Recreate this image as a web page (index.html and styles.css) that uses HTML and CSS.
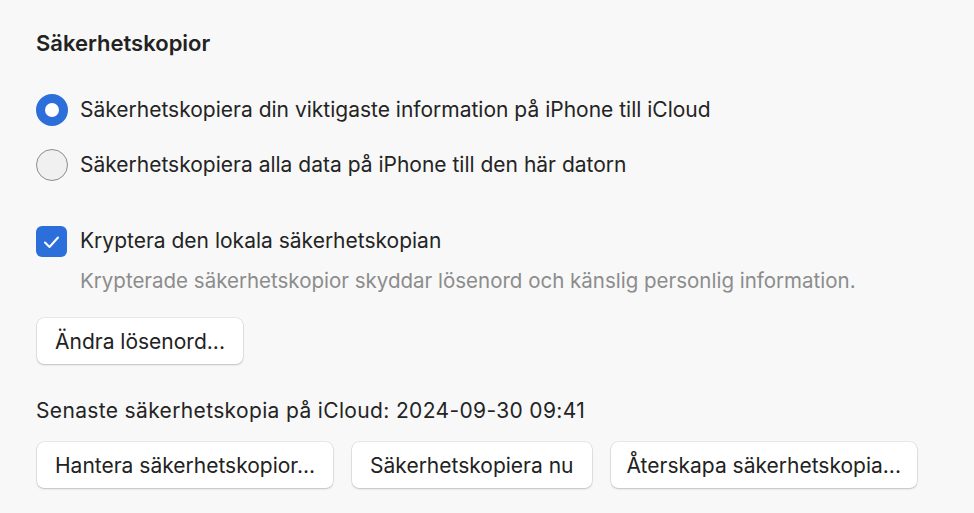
FILE: index.html
```html
<!DOCTYPE html>
<html lang="sv">
<head>
<meta charset="utf-8">
<link rel="stylesheet" href="styles.css">
</head>
<body>
<main class="panel">
  <h2 class="title">Säkerhetskopior</h2>
  <div class="radios">
    <label class="row">
      <span class="radio radio-on"></span>
      <span class="label">Säkerhetskopiera din viktigaste information på iPhone till iCloud</span>
    </label>
    <label class="row">
      <span class="radio"></span>
      <span class="label">Säkerhetskopiera alla data på iPhone till den här datorn</span>
    </label>
  </div>
  <label class="row check-row">
    <span class="checkbox">
      <svg width="31" height="31" viewBox="0 0 31 31"><path d="M9 16.5 L13.5 21 L22 11.5" fill="none" stroke="#fff" stroke-width="2" stroke-linecap="round" stroke-linejoin="round"/></svg>
    </span>
    <span class="label">Kryptera den lokala säkerhetskopian</span>
  </label>
  <p class="hint">Krypterade säkerhetskopior skyddar lösenord och känslig personlig information.</p>
  <div class="btns first-btn"><button class="btn">Ändra lösenord...</button></div>
  <p class="last">Senaste säkerhetskopia på iCloud: 2024-09-30 09:41</p>
  <div class="btns">
    <button class="btn">Hantera säkerhetskopior...</button>
    <button class="btn">Säkerhetskopiera nu</button>
    <button class="btn btn-narrow">Återskapa säkerhetskopia...</button>
  </div>
</main>
</body>
</html>
```
FILE: styles.css
```css
html, body {
  margin: 0;
  padding: 0;
  background: #f8f8f8;
  height: 100%;
}
body {
  font-family: Inter, "Liberation Sans", sans-serif;
  color: #242424;
  font-size: 21px;
  overflow: hidden;
}
.panel {
  padding: 31px 36px 0 36px;
  display: flex;
  flex-direction: column;
  align-items: flex-start;
}
.title {
  margin: 0;
  font-size: 22px;
  line-height: 24px;
  font-weight: 600;
  color: #222;
}
.radios {
  display: flex;
  flex-direction: column;
  gap: 23px;
  margin-top: 39px;
}
.row {
  display: flex;
  align-items: center;
  gap: 12px;
  height: 32px;
}
.label {
  line-height: 24px;
}
.radio {
  box-sizing: border-box;
  width: 32px;
  height: 32px;
  border-radius: 50%;
  border: 1.5px solid #8d8d8d;
  background: #f0f0f0;
  flex: none;
}
.radio-on {
  border: 9px solid #2c6fdb;
  background: #fff;
}
.check-row {
  margin-top: 44px;
}
.checkbox {
  width: 31px;
  height: 31px;
  border-radius: 6px;
  background: #2c6fdb;
  flex: none;
  display: flex;
  margin-right: 1px;
}
.hint {
  margin: 12px 0 0 44px;
  line-height: 24px;
  font-size: 20.5px;
  color: #8c8c8c;
}
.btns {
  display: flex;
  gap: 18px;
  margin-top: 19px;
}
.first-btn {
  margin-top: 25px;
}
.btn {
  font: inherit;
  color: #222;
  height: 46px;
  padding: 0 18px;
  margin-left: 1px;
  border: none;
  border-radius: 7px;
  background: #fff;
  box-shadow: 0 0 0 0.5px rgba(0,0,0,0.12), 0 1px 2px rgba(0,0,0,0.18);
}
.btn-narrow {
  padding: 0 16px;
}
.last {
  margin: 35px 0 0 0;
  line-height: 24px;
  letter-spacing: 0.35px;
}
```
